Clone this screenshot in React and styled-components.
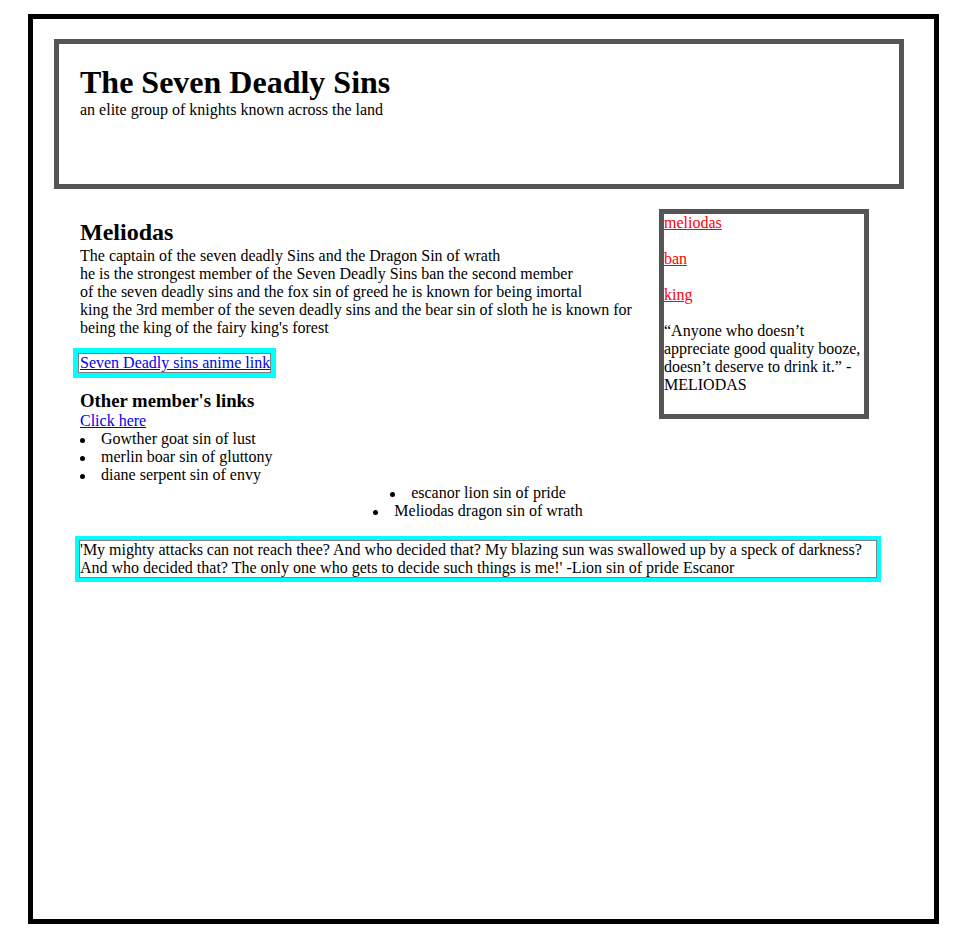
import React from "react";
import styled, { createGlobalStyle } from "styled-components";

const GlobalStyle = createGlobalStyle`
  body {
    margin: 8px;
    font-family: "Liberation Serif", "Times New Roman", serif;
    font-size: 16px;
    color: black;
    background: white;
  }
`;

const members = ["Gowther goat sin of lust", "merlin boar sin of gluttony", "diane serpent sin of envy"];
const centered = ["escanor lion sin of pride", "Meliodas dragon sin of wrath"];

function App() {
  return (
    <>
      <GlobalStyle />
      <Frame>
        <Header>
          <Title>The Seven Deadly Sins</Title>
          <Subtitle>an elite group of knights known across the land</Subtitle>
        </Header>
        <Main>
          <TopRow>
            <Article>
              <Name>Meliodas</Name>
              <Bio>
                The captain of the seven deadly Sins and the Dragon Sin of wrath<br />
                he is the strongest member of the Seven Deadly Sins ban the second member<br />
                of the seven deadly sins and the fox sin of greed he is known for being imortal<br />
                king the 3rd member of the seven deadly sins and the bear sin of sloth he is known for being the king of the fairy king's forest
              </Bio>
              <LinkWrap>
                <BoxedLink href="#">Seven Deadly sins anime link</BoxedLink>
              </LinkWrap>
              <SubTitle>Other member's links</SubTitle>
              <PlainLink href="#">Click here</PlainLink>
            </Article>
            <Aside>
              <RedLink href="#">meliodas</RedLink>
              <br />
              <br />
              <RedLink href="#">ban</RedLink>
              <br />
              <br />
              <RedLink href="#">king</RedLink>
              <br />
              <br />
              “Anyone who doesn’t appreciate good quality booze, doesn’t deserve to drink it.” - MELIODAS
            </Aside>
          </TopRow>
          <List>
            {members.map((m) => (
              <Item key={m}>{m}</Item>
            ))}
            {centered.map((m) => (
              <Item key={m} $center>
                {m}
              </Item>
            ))}
          </List>
          <Quote>
            'My mighty attacks can not reach thee? And who decided that? My blazing sun was swallowed up by a speck of darkness? And who decided that? The only one who gets to decide such things is me!' -Lion sin of pride Escanor
          </Quote>
        </Main>
      </Frame>
    </>
  );
}
export default App;

const Frame = styled.div`
  box-sizing: border-box;
  width: 911px;
  height: 910px;
  margin: 6px 0 0 20px;
  border: 5px solid black;
  padding-top: 20px;
`;

const Header = styled.header`
  box-sizing: border-box;
  width: 850px;
  height: 150px;
  margin-left: 21px;
  border: 5px solid #555;
  padding: 20px 21px;
`;

const Title = styled.h1`
  margin: 0;
  font-size: 32px;
  font-weight: bold;
`;

const Subtitle = styled.p`
  margin: 0;
`;

const Main = styled.main`
  width: 796px;
  margin: 20px 0 0 47px;
`;

const TopRow = styled.section`
  display: flex;
  align-items: flex-start;
`;

const Article = styled.article`
  flex: 1;
  min-width: 0;
`;

const Name = styled.h2`
  margin: 10px 0 0;
  font-size: 24px;
`;

const Bio = styled.p`
  margin: 1px 0 0;
`;

const LinkWrap = styled.div`
  margin-top: 16px;
`;

const BoxedLink = styled.a`
  display: inline-block;
  margin-left: -2px;
  padding-left: 1px;
  border: 1px solid #808080;
  outline: 5px solid #00ffff;
  color: #0000ee;
`;

const SubTitle = styled.h3`
  margin: 17px 0 0;
  font-size: 18.72px;
`;

const PlainLink = styled.a`
  display: block;
  width: fit-content;
  color: #0000ee;
`;

const Aside = styled.aside`
  width: 200px;
  height: 200px;
  margin-right: 7px;
  border: 5px solid #555;
  flex-shrink: 0;
`;

const RedLink = styled.a`
  color: red;
`;

const List = styled.ul`
  margin: 0;
  padding: 0;
  list-style: none;
`;

const Item = styled.li`
  text-align: ${(p) => (p.$center ? "center" : "left")};

  &::before {
    content: "";
    display: inline-block;
    width: 5px;
    height: 5px;
    margin-right: 16px;
    border-radius: 50%;
    background: black;
    vertical-align: middle;
  }
`;

const Quote = styled.blockquote`
  margin: 20px -1px 0;
  border: 1px solid #808080;
  outline: 4px solid #00ffff;
`;
